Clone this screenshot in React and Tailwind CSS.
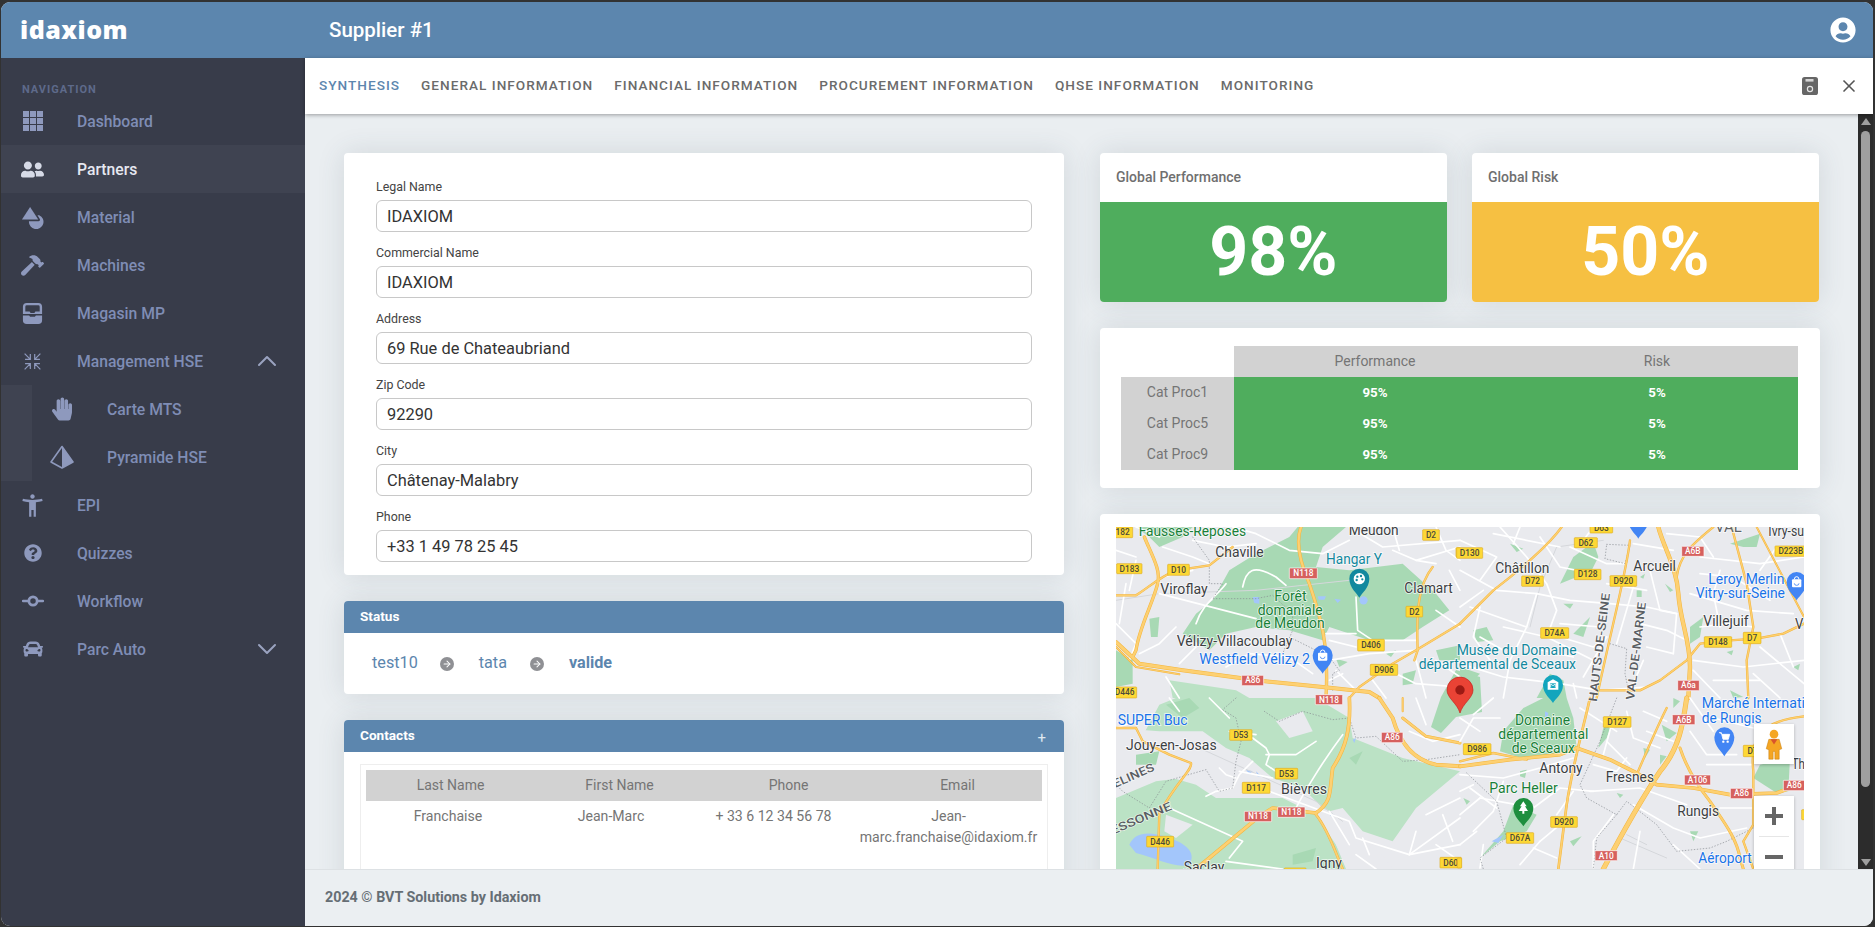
import React from "react";
import { FaUserFriends, FaHammer, FaHandPaper, FaQuestionCircle, FaCar, FaUserCircle } from "react-icons/fa";
import { MdAccessibilityNew } from "react-icons/md";
import { ChevronUp, ChevronDown, X, ArrowRight } from "lucide-react";

/* ---------- sidebar icons ---------- */
const IGrid = ({ c = "" }) => (
  <svg viewBox="0 0 20 20" className={c} fill="currentColor">
    {[0, 7, 14].flatMap((x) => [0, 7, 14].map((y) => <rect key={x + "-" + y} x={x} y={y} width="6" height="6" />))}
  </svg>
);
const IShapes = ({ c = "" }) => (
  <svg viewBox="0 0 24 24" className={c} fill="currentColor">
    <path d="M9.5 1 L18 14 H1 Z" />
    <path d="M19 9.6 A7.6 7.6 0 1 1 8.3 16 H18.2 A1.6 1.6 0 0 0 19.6 13.6 L17.2 9.6 Z" />
  </svg>
);
const ITrays = ({ c = "" }) => (
  <svg viewBox="0 0 24 24" className={c} fill="currentColor">
    <path fillRule="evenodd" d="M6 1h12a4 4 0 0 1 4 4v7.5H2V5a4 4 0 0 1 4-4zM4.5 5v5h4.5l1 1.5h4l1-1.5h4.5V5a1.5 1.5 0 0 0-1.5-1.5H6A1.5 1.5 0 0 0 4.5 5z" />
    <path d="M2 14h6.5l1 1.5h5l1-1.5H22v5a4 4 0 0 1-4 4H6a4 4 0 0 1-4-4z" />
  </svg>
);
const IShrink = ({ c = "" }) => (
  <svg viewBox="0 0 24 24" className={c} fill="none" stroke="currentColor" strokeWidth="1.4">
    <path d="M3 3l6.5 6.5M9.5 3.5v6H3.5M21 3l-6.5 6.5M14.5 3.5v6h6M3 21l6.5-6.5M9.5 20.5v-6H3.5M21 21l-6.5-6.5M14.5 20.5v-6h6" />
  </svg>
);
const IPyramid = ({ c = "" }) => (
  <svg viewBox="0 0 24 24" className={c}>
    <path d="M12 1.5 L23 17 L12 23 L1 17 Z" fill="none" stroke="currentColor" strokeWidth="1.6" strokeLinejoin="round" />
    <path d="M12 1.5 L23 17 L12 23 Z" fill="currentColor" />
  </svg>
);
const ICommit = ({ c = "" }) => (
  <svg viewBox="0 0 24 24" className={c} fill="none" stroke="currentColor">
    <circle cx="12" cy="12" r="4.5" strokeWidth="3" />
    <path d="M1 12h6M17 12h6" strokeWidth="2.6" strokeLinecap="round" />
  </svg>
);

const items = [
  { label: "Dashboard", icon: <IGrid c="w-[20px] h-[20px]" /> },
  { label: "Partners", active: true, icon: <FaUserFriends className="w-[23px] h-[23px]" /> },
  { label: "Material", icon: <IShapes c="w-[23px] h-[23px]" /> },
  { label: "Machines", icon: <FaHammer className="w-[23px] h-[23px]" /> },
  { label: "Magasin MP", icon: <ITrays c="w-[23px] h-[23px]" /> },
  { label: "Management HSE", icon: <IShrink c="w-[21px] h-[21px]" />, chevron: "up" },
  { label: "Carte MTS", sub: true, icon: <FaHandPaper className="w-[20px] h-[24px]" /> },
  { label: "Pyramide HSE", sub: true, icon: <IPyramid c="w-[24px] h-[24px]" /> },
  { label: "EPI", icon: <MdAccessibilityNew className="w-[27px] h-[27px]" /> },
  { label: "Quizzes", icon: <FaQuestionCircle className="w-[18px] h-[18px]" /> },
  { label: "Workflow", icon: <ICommit c="w-[22px] h-[22px]" /> },
  { label: "Parc Auto", icon: <FaCar className="w-[20px] h-[20px]" />, chevron: "down" },
];

function NavRow({ label, icon, active, sub, chevron }) {
  return (
    <div className={`h-[48px] flex items-center ${active ? "bg-[#3f4351] text-[#e6e8f0]" : "text-[#7f8db5]"}`}>
      {sub && <div className="w-[31px] h-full bg-[#3f4351] shrink-0" />}
      <div className={`${sub ? "w-[75px]" : "w-[76px] pl-[2px]"} flex items-center justify-center shrink-0`}>
        <span className={`-ml-[15px] ${active ? "text-[#d6dae6]" : "text-[#8e99bd]"} flex`}>{icon}</span>
      </div>
      <span className="text-[15.7px] font-medium flex-1 pt-[1px]">{label}</span>
      {chevron === "up" && <ChevronUp className="w-[32px] h-[32px] mr-[22px] text-[#9aa3c0]" strokeWidth={1.5} />}
      {chevron === "down" && <ChevronDown className="w-[32px] h-[32px] mr-[22px] text-[#9aa3c0]" strokeWidth={1.5} />}
    </div>
  );
}

/* ---------- form ---------- */
const fields = [
  ["Legal Name", "IDAXIOM"],
  ["Commercial Name", "IDAXIOM"],
  ["Address", "69 Rue de Chateaubriand"],
  ["Zip Code", "92290"],
  ["City", "Châtenay-Malabry"],
  ["Phone", "+33 1 49 78 25 45"],
];

const tabs = ["SYNTHESIS", "GENERAL INFORMATION", "FINANCIAL INFORMATION", "PROCUREMENT INFORMATION", "QHSE INFORMATION", "MONITORING"];

const cardShadow = "shadow-[0_0_28px_rgba(60,75,90,0.14)]";

/* ---------- map (coordinates are in 3x units per quadrant) ---------- */
const Y = "#fdd072";
const YO = "#f4b53c";
const G = "#a8d9b4";
const GL = "#bbe2c5";
const TXT = "#3c4043";
const GRN = "#188038";
const BLU = "#1a73e8";
const TEAL = "#12889e";

const quads = [
  {
    t: "translate(0 0) scale(0.33333)",
    light: ["M160,460 L360,490 400,513 170,513Z"],
    green: [
      "M60,0 L230,0 200,30 130,60 100,30Z",
      "M340,130 420,80 520,30 545,0 690,0 620,60 600,120 700,130 860,110 960,200 1000,250 920,300 860,340 760,340 640,300 620,340 520,310 420,300 330,320 280,370 200,320 240,260 290,220Z",
      "M0,370 50,400 50,470 0,480Z",
      "M100,275 130,270 125,330 105,330Z",
      "M660,395 L695,405 670,420Z",
      "M810,380 L840,370 825,390Z",
      "M960,370 L1032,355 1032,400 970,400Z",
      "M860,440 L900,430 890,470 860,475Z",
    ],
    white: [
      "M380,180 C390,130 410,110 480,150 L510,175",
      "M130,200 L420,275",
      "M240,290 C260,230 300,210 330,170",
      "M720,210 L725,310 L770,340 L900,340",
      "M630,320 L720,320",
      "M640,400 L760,380 L900,370",
      "M0,290 L60,350 L40,400",
      "M60,0 L130,30",
      "M350,0 L420,20 L520,70 L620,80 L700,40",
      "M900,100 L1032,60",
      "M700,0 L800,60 L1032,40",
      "M830,70 L900,100 L960,110",
      "M1000,130 L1032,190",
      "M0,70 L60,90",
      "M140,150 L230,130",
      "M30,170 L10,290",
      "M60,100 L40,190",
      "M150,450 L190,513",
      "M660,430 L720,490",
      "M1032,300 L960,250",
      "M960,400 L1032,450",
      "M230,40 L330,60 L420,50",
      "M140,60 L230,90 L280,110",
      "M180,300 L130,350 L70,380",
      "M830,0 L850,70",
      "M960,0 L990,70 L1032,100",
      "M640,340 L720,360",
      "M820,430 L900,470 L1032,480",
      "M770,460 L810,513",
      "M900,400 L930,513",
      "M330,420 L400,380 L520,390",
      "M520,390 L590,440",
      "M240,360 L190,410",
      "M680,440 L640,460",
    ],
    gray: ["M0,220 L130,200 M420,190 L700,160 M130,200 L420,190"],
    road: [
      ["M85,30 C110,90 135,130 125,170 C110,230 70,300 60,370 L50,390", 10],
      ["M0,205 L60,205 C100,180 130,150 180,130 L280,115 L350,60", 7],
      ["M555,0 C540,40 545,90 580,170 C610,260 640,340 630,513", 10],
      ["M950,120 C910,170 900,240 905,370 L895,400", 7],
      ["M1032,290 L900,370 L830,410 L730,480 L700,513", 7],
      ["M0,345 L70,410 L200,430 L440,462 L620,480 L760,495 L790,513", 12],
      ["M0,360 L60,420 L190,442", 6],
    ],
    dots: ["M230,30 L280,100 280,170 320,170 290,215 420,215 470,205 530,260 530,310 500,380", "M530,335 L640,390 670,430 650,440 650,490"],
    water: ["M410,210 L430,210 430,230 415,228Z", "M730,220 A12,12 0 1 1 755,220 A12,12 0 1 1 730,220Z", "M605,208 L630,208 625,218 608,218Z", "M655,215 L675,218 665,228Z"],
    shields: [
      [-10, 0, 50, 32, "182"], [2, 110, 78, 140, "D183"], [155, 112, 220, 145, "D10"], [520, 123, 604, 155, "N118", 1],
      [725, 337, 805, 372, "D406"], [763, 412, 845, 445, "D906"], [920, 8, 970, 40, "D2"], [870, 238, 920, 270, "D2"],
      [377, 445, 443, 476, "A86", 1], [-10, 480, 62, 513, "D446"], [1020, 62, 1034, 90, ""],
    ],
    labels: [
      ["Fausses-Reposes", 68, 27, 322, GRN], ["Chaville", 298, 90, 145, TXT], ["Meudon", 698, 24, 150, TXT], ["Hangar Y", 630, 112, 168, TEAL],
      ["Clamart", 865, 198, 145, TXT], ["Viroflay", 133, 202, 142, TXT], ["Forêt", 475, 222, 97, GRN], ["domaniale", 425, 264, 195, GRN],
      ["de Meudon", 418, 304, 208, GRN], ["Vélizy-Villacoublay", 182, 357, 347, TXT], ["Westfield Vélizy 2", 250, 412, 332, BLU],
    ],
    pins: [[730, 155, 30, 212, TEAL, "palette"], [620, 385, 30, 440, "#4285f4", "bag"]],
  },
  {
    t: "translate(344 0) scale(0.33333)",
    light: [],
    green: [
      "M300,170 340,90 400,45 415,90 395,130 350,150Z",
      "M810,50 L900,20 890,60 850,60Z",
      "M690,300 L730,270 720,330 690,350Z",
      "M40,310 L80,300 100,340 50,345Z",
      "M310,230 L340,230 330,245Z",
      "M360,300 L390,270 370,330 340,320Z",
      "M230,513 L270,440 310,460 320,513Z",
      "M530,190 L545,190 545,210 530,210Z",
      "M615,170 L640,190 630,195Z",
      "M0,420 L60,440 40,460 0,455Z",
      "M800,375 L820,370 815,385Z",
      "M810,490 L850,510 820,513Z",
      "M1000,420 L1020,410 1015,430Z",
      "M150,50 L190,65 170,75Z",
      "M540,150 L555,140 550,155Z",
    ],
    white: [
      "M0,130 L110,190 230,200 330,220 450,230 560,240 650,260",
      "M120,0 L200,90 260,170 290,250 260,330",
      "M230,200 L200,300 150,400 130,513",
      "M0,410 L130,450 300,470 420,490 560,480",
      "M300,290 L420,300",
      "M570,130 L600,250 650,260 640,380",
      "M520,50 L640,70",
      "M720,90 L900,110 1032,90",
      "M690,200 L860,250 1000,260",
      "M700,400 L850,420 1032,400",
      "M30,240 L200,300",
      "M100,20 L300,60",
      "M440,330 L370,450",
      "M520,180 L470,350",
      "M900,360 L1032,470",
      "M700,430 L780,513",
      "M780,130 L760,200 780,300",
      "M0,240 L70,190 M60,330 L130,370",
      "M0,40 L110,90 L60,160",
      "M180,0 L160,50",
      "M240,30 L300,120 L400,140",
      "M330,60 L440,110 L500,110",
      "M300,330 L400,360 L440,330",
      "M130,300 L260,330 L400,400",
      "M60,240 L40,330 L90,400",
      "M200,360 L340,390",
      "M540,290 L620,310 L680,340",
      "M560,360 L640,380",
      "M550,400 L520,470",
      "M720,140 L820,150 L930,220",
      "M900,130 L950,60",
      "M720,300 L800,290 L880,300",
      "M940,170 L1032,160",
      "M880,440 L960,513",
      "M760,460 L900,460",
      "M960,320 L1000,420",
      "M620,20 L720,30 L760,90",
      "M400,0 L370,40",
      "M440,170 L560,190",
      "M340,470 L350,513",
    ],
    gray: ["M430,40 L290,60 L240,180 L210,300"],
    road: [
      ["M305,0 C270,50 180,130 100,190 L0,290", 7],
      ["M510,40 C500,130 460,280 410,513", 7],
      ["M595,0 C610,60 650,120 655,200 C660,280 690,340 690,420 L685,513", 13],
      ["M760,0 C700,50 660,80 650,150", 7],
      ["M815,0 L860,170 880,300 860,400 865,513", 7],
      ["M890,0 L1032,270", 6],
      ["M1032,290 L970,320 890,335 810,340 720,350 680,400 600,460 540,490 420,490", 7],
    ],
    dots: ["M440,52 L510,55 495,110 435,95Z", "M450,350 L500,365 495,440 510,513"],
    water: [],
    shields: [
      [390, -10, 458, 18, "D63"], [-10, 62, 68, 94, "D130"], [343, 32, 412, 62, "D62"], [343, 127, 423, 158, "D128"],
      [185, 147, 250, 178, "D72"], [450, 146, 530, 178, "D920"], [242, 302, 326, 334, "D74A"], [665, 58, 732, 88, "A6B", 1],
      [945, 57, 1040, 88, "D223B"], [733, 329, 815, 361, "D148"], [850, 316, 903, 350, "D7"], [653, 460, 718, 491, "A6a", 1],
    ],
    labels: [
      ["Châtillon", 106, 137, 162, TXT], ["Arcueil", 520, 133, 128, TXT], ["Ivry-su", 925, 28, 107, TXT], ["VAL", 765, 15, 80, "#5f6368"],
      ["Leroy Merlin", 745, 170, 228, BLU], ["Vitry-sur-Seine", 707, 213, 268, BLU], ["Villejuif", 730, 296, 136, TXT], ["V", 1005, 305, 25, TXT],
      ["Musée du Domaine", -10, 385, 360, TEAL], ["départemental de Sceaux", -124, 427, 472, TEAL],
    ],
    pins: [[279, 474, 30, 528, "#12a5bd", "museum"], [1010, 165, 30, 220, "#4285f4", "bag"], [535, -20, 30, 35, "#4285f4", ""]],
    rot: [
      ["HAUTS-DE-SEINE", 410, 525, 327, -83],
      ["VAL-DE-MARNE", 522, 520, 295, -83],
    ],
  },
  {
    t: "translate(0 171) scale(0.33333)",
    light: ["M130,20 180,0 600,0 700,60 710,120 860,180 1032,220 900,330 830,430 740,400 680,330 640,340 660,440 690,513 0,513 0,300 120,250 200,240 240,250 130,150 50,170Z"],
    green: ["M150,20 L220,0 250,30 200,60Z", "M60,170 L130,160 120,200 60,200Z", "M530,470 L600,450 590,490 530,500Z", "M700,180 L740,160 720,200Z"],
    grayfill: ["M0,90 L130,100 260,100 330,150 400,180 470,240 560,270 620,330 700,370 720,420 800,470 830,513 700,513 660,440 600,350 500,300 300,300 240,260 170,240 40,240 0,250Z", "M480,70 L560,40 590,100 520,120Z", "M150,350 L230,380 180,420 145,400Z"],
    white: [
      "M410,120 L450,150 460,170 450,200 480,220",
      "M450,170 L540,170 600,130",
      "M680,110 C620,190 560,290 540,330",
      "M160,330 L380,430 L340,480",
      "M330,490 L500,513",
      "M370,220 L470,240",
      "M460,280 L620,340 L700,370 L720,420 L880,470 L1032,360",
      "M880,470 L1032,440",
      "M310,210 L330,230 L360,240",
      "M270,295 L300,280 L350,270 L370,230 L410,190",
      "M280,0 L340,60",
      "M160,0 L190,40",
      "M740,420 L760,470",
      "M0,90 L90,60",
      "M930,350 L1032,300",
      "M960,440 L1032,490",
      "M880,100 L950,130 L1032,110",
      "M900,0 L930,80",
      "M980,350 L1010,430",
      "M900,400 L880,470",
      "M720,470 L780,513",
      "M640,340 L700,440",
      "M420,110 L340,100",
    ],
    gray: ["M250,150 L360,200 L600,310 L680,370"],
    road: [
      ["M700,0 C705,90 690,150 650,210 C640,280 650,310 600,345 L470,330 L430,355 L240,513", 11],
      ["M600,350 C640,400 660,470 680,513", 8],
      ["M130,345 L125,513", 7],
      ["M0,90 L60,90 L80,130 L160,170 L225,195 C230,215 190,240 130,345", 7],
      ["M790,0 L830,60 C850,130 890,185 960,200 L1032,205", 12],
      ["M860,60 L930,115 L1032,135", 9],
      ["M860,0 L860,40", 6],
    ],
    dots: ["M360,0 L320,35 360,60 375,130 360,190 350,270 310,280 270,215 200,235 150,250 100,330 20,280 0,260", "M445,40 L490,70 560,40 650,65 700,60 720,120 780,115 860,190 930,185 1032,170"],
    water: ["M40,440 C60,400 100,400 160,420 C220,440 240,470 220,500 C180,513 120,480 60,465Z", "M390,215 L410,220 400,228Z", "M420,220 L435,235 425,235Z", "M640,345 L655,350 645,355Z", "M710,125 L720,120 715,135Z"],
    shields: [
      [598, -10, 680, 20, "N118", 1], [341, 95, 408, 127, "D53"], [796, 103, 861, 134, "A86", 1], [478, 211, 545, 243, "D53"],
      [379, 253, 462, 286, "D117"], [485, 327, 567, 358, "N118", 1], [385, 340, 467, 371, "N118", 1], [92, 415, 173, 447, "D446"],
      [972, 478, 1036, 510, "D60"], [505, 510, 570, 530, ""],
    ],
    labels: [
      ["SUPER Buc", 5, 80, 210, BLU], ["Jouy-en-Josas", 30, 155, 272, TXT], ["Bièvres", 495, 287, 138, TXT],
      ["Saclay", 203, 522, 122, TXT], ["Igny", 600, 510, 78, TXT],
    ],
    pins: [],
    rot: [
      ["ELINES", -3, 270, 132, -24],
      ["ESSONNE", -10, 410, 195, -23],
    ],
  },
  {
    t: "translate(344 171) scale(0.33333)",
    light: [],
    green: [
      "M190,30 L250,0 320,0 340,60 350,150 290,170 200,185 120,160 130,100Z",
      "M605,80 L650,105 620,130Z",
      "M900,200 L990,180 985,280 950,285 880,240Z",
      "M160,320 L230,350 200,400 120,430 60,480 130,400Z",
      "M180,220 L200,215 195,240 180,235Z",
      "M470,285 L490,290 480,300Z",
      "M550,150 L570,155 555,180Z",
      "M600,170 L620,175 600,200Z",
      "M690,400 L715,400 700,430Z",
      "M330,430 L365,415 340,445Z",
      "M430,90 L445,70 455,80 440,120 415,150Z",
      "M10,300 L30,310 20,320Z",
      "M640,0 L660,10 640,30Z",
    ],
    white: [
      "M0,130 L40,60 120,60",
      "M0,230 L130,240 240,210 340,180",
      "M390,280 L540,270 680,320",
      "M500,40 L520,120 600,150",
      "M40,50 L100,0",
      "M60,300 L170,320",
      "M400,510 L400,430 460,350",
      "M60,510 L70,440",
      "M690,0 L760,100",
      "M520,320 L640,390 L720,420 L860,390",
      "M130,250 L100,340 40,400",
      "M220,330 L300,270 L400,280",
      "M0,350 L60,300",
      "M240,430 L300,380",
      "M460,60 L430,170",
      "M760,60 L880,90",
      "M0,60 L60,100",
      "M360,30 L470,100",
      "M440,130 L510,200",
      "M400,200 L470,220 L500,180",
      "M220,450 L290,480",
      "M180,500 L240,430",
      "M0,440 L50,400",
      "M550,40 L620,70",
      "M560,100 L640,130",
      "M690,100 L740,170 L830,170",
      "M740,200 L880,200",
      "M780,330 L880,330",
      "M640,440 L720,513",
      "M540,400 L520,513",
      "M340,280 L290,350",
      "M110,330 L30,270",
      "M0,280 L40,260",
    ],
    gray: ["M480,420 L620,480 M500,410 L560,440"],
    road: [
      ["M0,205 L150,185 300,170 350,150 450,185 530,225 590,260 700,270 810,290 950,285 1032,255", 11],
      ["M0,190 L100,165 200,185", 7],
      ["M680,0 C670,70 660,150 600,220 C560,280 500,380 430,513", 15],
      ["M620,30 C590,90 560,160 530,230", 7],
      ["M660,150 C680,210 710,260 750,310 C790,370 830,420 840,480 L850,513", 9],
      ["M390,0 C370,90 340,190 320,320 L295,513", 8],
      ["M880,513 L850,430 880,380 880,220 C870,130 890,70 1032,55", 7],
    ],
    dots: ["M470,0 L420,130 360,260 380,300 470,350 500,310 590,380 650,460 750,450 800,430 880,390", "M20,225 L110,310 140,420 60,480 70,513", "M470,350 L410,420 400,510"],
    water: ["M95,430 L130,410 115,435Z", "M255,40 L265,45 262,60 255,60Z"],
    shields: [
      [637, 50, 705, 80, "A6B", 1], [430, 56, 513, 88, "D127"], [10, 137, 93, 170, "D986"], [850, 142, 905, 176, "D7"],
      [673, 231, 752, 261, "A106", 1], [811, 271, 878, 302, "A86", 1], [970, 247, 1036, 278, "A86", 1], [272, 356, 352, 388, "D920"],
      [139, 404, 221, 436, "D67A"], [405, 458, 472, 488, "A10", 1], [-8, 480, 5, 510, ""], [1025, 335, 1036, 365, ""],
    ],
    labels: [
      ["Domaine", 165, 82, 165, GRN], ["départemental", 115, 123, 270, GRN], ["de Sceaux", 155, 166, 190, GRN], ["Antony", 238, 224, 130, TXT],
      ["Fresnes", 437, 253, 145, TXT], ["Parc Heller", 88, 285, 205, GRN], ["Rungis", 652, 355, 125, TXT], ["Marché Internati", 725, 30, 310, BLU],
      ["de Rungis", 725, 75, 180, BLU], ["Aéroport", 715, 494, 160, BLU], ["Th", 995, 212, 40, TXT],
    ],
    pins: [[190, 330, 30, 385, "#1e8e3e", "tree"], [793, 118, 30, 175, "#4285f4", "cart"]],
  },
];

function Pin({ p }) {
  const [cx, cy, r, ty, col, kind] = p;
  return (
    <g>
      <path d={`M${cx - r},${cy} A${r},${r} 0 1 1 ${cx + r},${cy} C${cx + r},${cy + r * 0.9} ${cx + r * 0.2},${ty - r * 0.4} ${cx},${ty} C${cx - r * 0.2},${ty - r * 0.4} ${cx - r},${cy + r * 0.9} ${cx - r},${cy} Z`} fill={col} />
      {kind === "palette" && <><circle cx={cx} cy={cy} r="17" fill="#fff" /><circle cx={cx - 6} cy={cy - 6} r="3.5" fill={col} /><circle cx={cx + 5} cy={cy - 8} r="3.5" fill={col} /><circle cx={cx + 9} cy={cy + 2} r="3.5" fill={col} /><circle cx={cx - 8} cy={cy + 4} r="3.5" fill={col} /></>}
      {kind === "bag" && <><rect x={cx - 14} y={cy - 8} width="28" height="24" rx="3" fill="#fff" /><path d={`M${cx - 7},${cy - 8} a7,8 0 0 1 14,0`} fill="none" stroke="#fff" strokeWidth="3" /><path d={`M${cx - 7},${cy + 4} a7,6 0 0 0 14,0`} fill="none" stroke={col} strokeWidth="2.5" /></>}
      {kind === "museum" && <><path d={`M${cx - 16},${cy - 8} L${cx},${cy - 17} L${cx + 16},${cy - 8} V${cy + 14} H${cx - 16} Z`} fill="#fff" /><rect x={cx - 9} y={cy - 5} width="18" height="14" fill={col} /><path d={`M${cx - 7},${cy + 8} V${cy - 3} L${cx},${cy + 2} L${cx + 7},${cy - 3} V${cy + 8}`} stroke="#fff" strokeWidth="2.5" fill="none" /></>}
      {kind === "tree" && <path d={`M${cx},${cy - 20} L${cx + 10},${cy - 5} H${cx + 5} L${cx + 14},${cy + 9} H${cx + 3} V${cy + 17} H${cx - 3} V${cy + 9} H${cx - 14} L${cx - 5},${cy - 5} H${cx - 10} Z`} fill="#fff" />}
      {kind === "cart" && <><path d={`M${cx - 16},${cy - 14} H${cx - 9} L${cx - 4},${cy + 6} H${cx + 12} L${cx + 16},${cy - 9} H${cx - 7}`} fill="#fff" stroke="#fff" strokeWidth="2.5" /><circle cx={cx - 3} cy={cy + 13} r="3.5" fill="#fff" /><circle cx={cx + 10} cy={cy + 13} r="3.5" fill="#fff" /></>}
    </g>
  );
}

function MapDrawing() {
  return (
    <svg viewBox="0 0 688 400" className="block w-[688px] h-[400px]">
      <rect width="688" height="400" fill="#e9eaee" />
      {quads.map((q, i) => (
        <g key={i} transform={q.t} fill="none" strokeLinecap="round" strokeLinejoin="round">
          {q.light.map((d, k) => <path key={k} d={d} fill={GL} />)}
          {(q.grayfill || []).map((d, k) => <path key={k} d={d} fill="#e9eaee" />)}
          {q.green.map((d, k) => <path key={k} d={d} fill={G} />)}
          {q.water.map((d, k) => <path key={k} d={d} fill="#a3c6fb" />)}
          {q.gray.map((d, k) => <path key={k} d={d} stroke="#d5d7db" strokeWidth="3" />)}
        </g>
      ))}
      <path d="M340,143 L364,150 L366,185 L340,190 L325,206 L315,200 L325,170 Z" fill={G} />
      {quads.map((q, i) => (
        <g key={i} transform={q.t} fill="none" strokeLinecap="round" strokeLinejoin="round">
          {q.white.map((d, k) => <path key={k} d={d} stroke="#ffffff" strokeWidth="5" />)}
          {q.dots.map((d, k) => <path key={k} d={d} stroke="#85898f" strokeWidth="2" strokeDasharray="2 7" />)}
          {q.road.map(([d, w], k) => <path key={k} d={d} stroke={YO} strokeWidth={w} />)}
          {q.road.map(([d, w], k) => <path key={k} d={d} stroke={Y} strokeWidth={w - 3} />)}
        </g>
      ))}
      {quads.map((q, i) => (
        <g key={i} transform={q.t} style={{ fontFamily: "Roboto, sans-serif" }}>
          {q.shields.map(([x1, y1, x2, y2, t, red], k) => (
            <g key={k}>
              <rect x={x1} y={y1} width={x2 - x1} height={y2 - y1} rx="2" fill={red ? "#d6605e" : "#fdd835"} stroke={red ? "#fff" : "#e0ae26"} strokeWidth="2" />
              {t && <text x={(x1 + x2) / 2} y={(y1 + y2) / 2 + 9} textAnchor="middle" fontSize="25" fontWeight="500" fill={red ? "#fff" : "#4a4a3a"}>{t}</text>}
            </g>
          ))}
          {q.labels.map(([t, x, y, w, c], k) => (
            <text key={k} x={x} y={y} textLength={w} lengthAdjust="spacingAndGlyphs" fontSize="42" fill={c} stroke="#fff" strokeWidth="5" strokeOpacity="0.75" style={{ paintOrder: "stroke" }}>{t}</text>
          ))}
          {(q.rot || []).map(([t, x, y, w, a], k) => (
            <text key={k} transform={`translate(${x} ${y}) rotate(${a})`} textLength={w} lengthAdjust="spacingAndGlyphs" fontSize="35" fontWeight="500" fill="#5a5e63" stroke="#fff" strokeWidth="4" strokeOpacity="0.7" style={{ paintOrder: "stroke" }}>{t}</text>
          ))}
          {q.pins.map((p, k) => <Pin key={k} p={p} />)}
        </g>
      ))}
      {/* location marker */}
      <path d="M344,186 C341,176 331,171 331,163 A13,13 0 1 1 357,163 C357,171 347,176 344,186 Z" fill="#ea4335" stroke="#c5221f" strokeWidth="0.7" />
      <circle cx="344" cy="163" r="4.7" fill="#9c1a14" />
    </svg>
  );
}

function MapControls() {
  return (
    <>
      <div className="absolute left-[638px] top-[197px] w-[40px] h-[40px] bg-white shadow-[0_1px_3px_rgba(0,0,0,0.25)] flex items-center justify-center">
        <svg viewBox="0 0 20 36" className="w-[18px] h-[31px]">
          <circle cx="10" cy="6" r="5" fill="#f5a623" />
          <path d="M4 12 H16 L19 23 L16 24 V35 H11 V26 H9 V35 H4 V24 L1 23 Z" fill="#f5a623" stroke="#c77f10" strokeWidth="0.6" />
          <path d="M6 12 L10 18 L14 12 Z" fill="#d9542b" />
        </svg>
      </div>
      <div className="absolute left-[638px] top-[269px] w-[40px] h-[81px] bg-white shadow-[0_1px_3px_rgba(0,0,0,0.25)] flex flex-col items-center">
        <div className="h-[40px] flex items-center justify-center">
          <svg viewBox="0 0 18 18" className="w-[18px] h-[18px]"><path d="M0 7h18v4H0zM7 0h4v18H7z" fill="#666" /></svg>
        </div>
        <div className="w-[30px] h-px bg-[#e6e6e6]" />
        <div className="h-[40px] flex items-center justify-center">
          <svg viewBox="0 0 18 18" className="w-[18px] h-[18px]"><path d="M0 7h18v4H0z" fill="#666" /></svg>
        </div>
      </div>
    </>
  );
}

const th = "text-[14px] text-[#757575]";

export default function App() {
  return (
    <div className="h-screen overflow-hidden bg-[#323232] pt-[2px] pb-px pl-px pr-[2px] [font-family:Roboto,sans-serif]">
      <div className="h-full rounded-[9px] overflow-hidden flex flex-col bg-[#ebeff2]">
        {/* header */}
        <header className="h-[56px] shrink-0 bg-[#5c86ae] flex items-center text-white">
          <div className="w-[304px] pl-[19px] text-[25px] font-extrabold tracking-[0.5px] leading-none [font-family:'Open_Sans',sans-serif] -mt-[1px]">idaxiom</div>
          <div className="text-[20.5px] font-medium flex-1 pl-[24px]">Supplier #1</div>
          <FaUserCircle className="w-[26px] h-[26px] mr-[17px]" />
        </header>

        <div className="flex flex-1 min-h-0">
          {/* sidebar */}
          <aside className="w-[304px] shrink-0 bg-[#383c4a] pt-[24px]">
            <div className="pl-[21px] text-[11px] font-bold tracking-[1px] leading-[15px] text-[#5e6a8a]">NAVIGATION</div>
            {items.map((it) => <NavRow key={it.label} {...it} />)}
          </aside>

          <main className="flex-1 min-w-0 flex flex-col">
            {/* tabs */}
            <div className="h-[56px] shrink-0 bg-white relative z-10 shadow-[0_1px_4px_rgba(0,0,0,0.35)] flex items-center pl-[14px] pr-[14px]">
              <div className="flex gap-[21px] flex-1 -mt-[1px]">
                {tabs.map((t, i) => (
                  <span key={t} className={`text-[13.6px] font-medium tracking-[1.02px] ${i === 0 ? "text-[#5c86ae]" : "text-[#6b6b6b]"}`}>{t}</span>
                ))}
              </div>
              <svg viewBox="0 0 16 18" className="w-[16px] h-[18px] mr-[21px]">
                <rect width="16" height="18" rx="2.6" fill="#666" />
                <rect x="3.5" y="2" width="8" height="2.6" fill="#d5d5d5" />
                <circle cx="8" cy="12" r="2.6" fill="none" stroke="#e4e4e4" strokeWidth="1.2" />
              </svg>
              <X className="w-[20px] h-[20px] text-[#555]" strokeWidth={2} />
            </div>

            {/* scrolling content */}
            <div className="flex-1 min-h-0 flex bg-[#eaeef1]">
              <div className="flex-1 min-w-0 overflow-hidden pt-[39px] pl-[39px] pr-[38px]">
                <div className="grid grid-cols-[720px_720px] gap-x-[36px]">
                  {/* left */}
                  <div className="flex flex-col gap-[26px]">
                    <div className={`bg-white rounded-[4px] ${cardShadow} pl-[32px] pr-[32px] pt-[24px] pb-[13px] flex flex-col gap-[11px]`}>
                      {fields.map(([l, v]) => (
                        <div key={l}>
                          <div className="text-[12.4px] leading-[20px] mb-[3px] text-[#444]">{l}</div>
                          <input readOnly value={v} className="w-full h-[32px] border border-[#c8c8c8] rounded-[6px] px-[10px] text-[16.4px] text-[#333] bg-white outline-none [font-family:Roboto,sans-serif]" />
                        </div>
                      ))}
                    </div>

                    <div className={`bg-white rounded-[4px] overflow-hidden ${cardShadow}`}>
                      <div className="h-[32px] bg-[#5c86ae] flex items-center pl-[16px] pb-[2px] text-white text-[13.6px] font-bold">Status</div>
                      <div className="h-[61px] flex items-center pl-[28px] text-[16.2px] text-[#5c86ae]">
                        <span>test10</span>
                        <span className="ml-[22px] w-[14px] h-[14px] rounded-full bg-[#8f9094] flex items-center justify-center"><ArrowRight className="w-[10px] h-[10px] text-white" strokeWidth={2.5} /></span>
                        <span className="ml-[25px]">tata</span>
                        <span className="ml-[23px] w-[14px] h-[14px] rounded-full bg-[#8f9094] flex items-center justify-center"><ArrowRight className="w-[10px] h-[10px] text-white" strokeWidth={2.5} /></span>
                        <span className="ml-[25px] font-bold">valide</span>
                      </div>
                    </div>

                    <div className={`bg-white rounded-[4px] overflow-hidden ${cardShadow}`}>
                      <div className="h-[32px] bg-[#5c86ae] flex items-center justify-between pl-[16px] pr-[18px] text-white text-[13.6px] font-bold">
                        <span className="pb-[2px]">Contacts</span>
                        <span className="text-[15px] font-normal text-[#dfe7ef] mt-[5px]">+</span>
                      </div>
                      <div className="pt-[12px] px-[16px] pb-[30px]">
                        <div className="border border-[#eeeeee] pt-[5px] px-[5px] pb-[40px]">
                          <div className="grid grid-cols-4 h-[31px] bg-[#d2d2d2] items-center text-center">
                            {["Last Name", "First Name", "Phone", "Email"].map((h) => <div key={h} className={th}>{h}</div>)}
                          </div>
                          <div className="grid grid-cols-[164px_162px_163px_187px] text-center text-[14.1px] leading-[21px] text-[#757575] pt-[5px]">
                            <div>Franchaise</div>
                            <div>Jean-Marc</div>
                            <div>+ 33 6 12 34 56 78</div>
                            <div>Jean-marc.franchaise@idaxiom.fr</div>
                          </div>
                        </div>
                      </div>
                    </div>
                  </div>

                  {/* right */}
                  <div className="flex flex-col gap-[26px]">
                    <div className="grid grid-cols-[347px_347px] gap-x-[25px] -mr-px">
                      {[["Global Performance", "98%", "bg-[#4fad5d]"], ["Global Risk", "50%", "bg-[#f6c042]"]].map(([t, v, bg]) => (
                        <div key={t} className={`bg-white rounded-[4px] overflow-hidden ${cardShadow}`}>
                          <div className="h-[49px] flex items-center pl-[16px] text-[14px] font-medium text-[#6f6f6f]">{t}</div>
                          <div className={`h-[100px] ${bg} flex items-center justify-center text-white text-[68px] font-bold leading-none`}>{v}</div>
                        </div>
                      ))}
                    </div>

                    <div className={`bg-white rounded-[4px] ${cardShadow} pt-[18px] pb-[18px] pl-[21px] pr-[22px]`}>
                      <div className="grid grid-cols-[113px_282px_282px] text-center">
                        <div className="h-[31px]" />
                        <div className={`h-[31px] bg-[#d2d2d2] flex items-center justify-center ${th}`}>Performance</div>
                        <div className={`h-[31px] bg-[#d2d2d2] flex items-center justify-center ${th}`}>Risk</div>
                        {["Cat Proc1", "Cat Proc5", "Cat Proc9"].map((c) => (
                          <React.Fragment key={c}>
                            <div className={`h-[31px] bg-[#d2d2d2] flex items-center justify-center ${th}`}>{c}</div>
                            <div className="h-[31px] bg-[#4fad5d] flex items-center justify-center text-white text-[13.3px] font-bold">95%</div>
                            <div className="h-[31px] bg-[#4fad5d] flex items-center justify-center text-white text-[13.3px] font-bold">5%</div>
                          </React.Fragment>
                        ))}
                      </div>
                    </div>

                    <div className={`bg-white rounded-[4px] ${cardShadow} pt-[13px] pb-[13px] pl-[16px] pr-[16px]`}>
                      <div className="relative w-[688px] h-[400px] overflow-hidden">
                        <MapDrawing />
                        <MapControls />
                      </div>
                    </div>
                  </div>
                </div>
              </div>

              {/* scrollbar */}
              <div className="w-[15px] shrink-0 bg-[#2c2c2c] flex flex-col items-center pt-[4px] pb-[3px]">
                <div className="w-0 h-0 border-x-[5px] border-x-transparent border-b-[7px] border-b-[#9f9f9f]" />
                <div className="w-[9px] h-[656px] mt-[6px] bg-[#9f9f9f] rounded-full" />
                <div className="flex-1" />
                <div className="w-0 h-0 border-x-[5px] border-x-transparent border-t-[7px] border-t-[#9f9f9f]" />
              </div>
            </div>

            {/* footer */}
            <footer className="h-[57px] shrink-0 bg-[#ebeff2] border-t border-[#dde1e4] flex items-center pl-[20px] text-[14.3px] font-bold text-[#666e75] relative z-10">
              2024 © BVT Solutions by Idaxiom
            </footer>
          </main>
        </div>
      </div>
    </div>
  );
}
